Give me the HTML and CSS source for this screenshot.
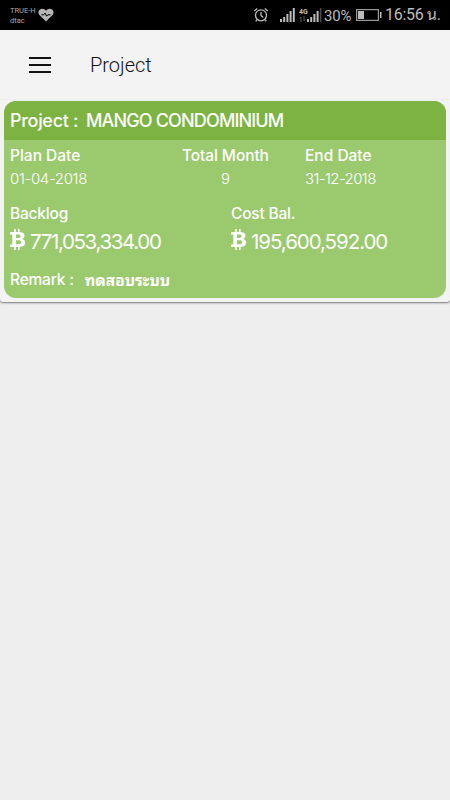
FILE: index.html
```
<!DOCTYPE html>
<html lang="th">
<head>
    <meta charset="UTF-8">
    <meta name="viewport" content="width=device-width, initial-scale=1.0">
    <title>Project</title>
    <link rel="stylesheet" href="styles.css">
</head>
<body>
    <!-- Status bar -->
    <div class="status-bar">
        <div class="carrier">
            <span>TRUE-H</span>
            <span>dtac</span>
        </div>
        <svg class="heart" width="16" height="14" viewBox="0 0 16 14">
            <path d="M8 13.4 1.4 7C-.5 4.8.4 1 3.9.7 5.700.6 7.200 1.500 8 2.700 8.800 1.500 10.300.6 12.100.7 15.600 1 16.500 4.800 14.600 7z" fill="#b5b5b5"/>
            <path d="M3.500 6.800h2.300l1.200-1.800 1.700 3.200 1.200-1.400h2.600" fill="none" stroke="#000" stroke-width="1"/>
        </svg>
        <svg class="alarm" width="16" height="16" viewBox="0 0 16 16" fill="none" stroke="#bcbcbc" stroke-width="1.3">
            <circle cx="8" cy="8.300" r="5.500"/>
            <path d="M8 5v3.500l2.200 2M1.200 4.100 4.200 1.500M14.800 4.100 11.800 1.500M4 12.700l-1.300 1.500M12 12.700l1.300 1.500"/>
        </svg>
        <svg class="signal" width="15" height="14" viewBox="0 0 15 14" fill="#bcbcbc">
            <path d="M0 11h2v3H0zM3.200 9h2v5h-2zM6.400 6h2v8h-2zM9.600 3h2v11h-2zM12.800 0h2v14h-2z"/>
        </svg>
        <div class="network">
            <span>4G</span>
            <svg width="7" height="6" viewBox="0 0 7 6" fill="none" stroke="#555" stroke-width="1">
                <path d="M2 6V1M.5 2.500 2 1M5 0v5M6.500 3.500 5 5"/>
            </svg>
        </div>
        <svg class="signal-two" width="15" height="14" viewBox="0 0 15 14" fill="#bcbcbc">
            <path d="M0 11h2v3H0zM3.200 9h2v5h-2zM6.400 6h2v8h-2zM9.600 3h2v11h-2z"/>
            <path d="M12.800 0h1.600v14h-1.600z" fill="#4a4a4a"/>
        </svg>
        <span class="percent">30%</span>
        <svg class="battery" width="26" height="12" viewBox="0 0 26 12">
            <rect x=".6" y=".6" width="21.800" height="10.800" fill="none" stroke="#999" stroke-width="1.200"/>
            <path d="M2 2h6v8H2z" fill="#bcbcbc"/>
            <path d="M24 3h1.500v6H24z" fill="#bcbcbc"/>
        </svg>
        <span class="clock">16:56 น.</span>
    </div>

    <!-- Toolbar -->
    <header class="toolbar">
        <button class="menu-btn" aria-label="Menu"><i></i><i></i><i></i></button>
        <h1>Project</h1>
    </header>

    <!-- Project card -->
    <main class="project-list">
        <section class="card">
            <h2 class="card-header"><span class="card-key">Project :</span><span class="card-name">MANGO CONDOMINIUM</span></h2>
            <div class="card-body">
                <div class="dates">
                    <div class="field plan">
                        <span class="label">Plan Date</span>
                        <span class="value">01-04-2018</span>
                    </div>
                    <div class="field total">
                        <span class="label">Total Month</span>
                        <span class="value">9</span>
                    </div>
                    <div class="field end">
                        <span class="label">End Date</span>
                        <span class="value">31-12-2018</span>
                    </div>
                </div>
                <div class="amounts">
                    <div class="field backlog">
                        <span class="label">Backlog</span>
                        <div class="money">
                            <svg class="coin" width="16" height="21" viewBox="0 0 16 21">
                                <path d="M0 3h9c3.500 0 5.500 1.200 5.500 3.700 0 1.700-1 2.700-2.500 3.200 2 .4 3.200 1.700 3.200 3.700 0 3-2.400 4.400-6.200 4.400H0v-2.400h2.300V5.400H0zM6 5.600v3.300h2c1.700 0 2.600-.5 2.600-1.700S9.700 5.600 8 5.600zM6 11.200v4h2.300c1.900 0 2.900-.6 2.900-2s-1-2-2.900-2z" fill="#fff" fill-rule="evenodd"/>
                                <path d="M4.200 0h1.600V4H4.200zM8 0h1.600V4H8zM4.200 17h1.600v4H4.200zM8 17h1.600v4H8z" fill="#fff"/>
                            </svg>
                            <span>771,053,334.00</span>
                        </div>
                    </div>
                    <div class="field cost">
                        <span class="label">Cost Bal.</span>
                        <div class="money">
                            <svg class="coin" width="16" height="21" viewBox="0 0 16 21">
                                <path d="M0 3h9c3.500 0 5.500 1.200 5.500 3.700 0 1.700-1 2.700-2.500 3.200 2 .4 3.200 1.700 3.200 3.700 0 3-2.400 4.400-6.200 4.400H0v-2.400h2.300V5.400H0zM6 5.600v3.300h2c1.700 0 2.600-.5 2.600-1.700S9.700 5.600 8 5.600zM6 11.200v4h2.300c1.900 0 2.900-.6 2.900-2s-1-2-2.900-2z" fill="#fff" fill-rule="evenodd"/>
                                <path d="M4.200 0h1.600V4H4.200zM8 0h1.600V4H8zM4.200 17h1.600v4H4.200zM8 17h1.600v4H8z" fill="#fff"/>
                            </svg>
                            <span>195,600,592.00</span>
                        </div>
                    </div>
                </div>
                <div class="remark">
                    <span class="label">Remark :</span>
                    <span class="remark-text">ทดสอบระบบ</span>
                </div>
            </div>
        </section>
    </main>
</body>
</html>
```
FILE: styles.css
```
* {
    box-sizing: border-box;
    margin: 0;
    padding: 0;
}

body {
    font-family: Inter, "Noto Sans Thai", "Noto Sans", sans-serif;
    background: #eee;
    min-height: 100vh;
    overflow: hidden;
}

span {
    white-space: nowrap;
}

svg {
    display: block;
    flex: none;
}

/* Status bar */
.status-bar {
    display: flex;
    align-items: center;
    height: 30px;
    padding-left: 10px;
    background: #000;
    color: #bcbcbc;
    font-family: Roboto, "Noto Sans Thai Looped", Loma, "Noto Sans Thai", sans-serif;
}

.carrier {
    display: flex;
    flex-direction: column;
    width: 27px;
    padding-top: 1px;
    font-size: 7.5px;
    line-height: 10px;
    color: #aaa;
}

.heart {
    margin-left: 1px;
}

.alarm {
    margin-left: 199px;
}

.signal {
    margin-left: 11px;
}

.network {
    width: 10px;
    margin-left: 4px;
    font-size: 7px;
    font-weight: 700;
    line-height: 8px;
}

.signal-two {
    margin-left: -2px;
}

.percent {
    width: 29px;
    margin-left: 2px;
    padding-top: 1px;
    font-size: 15px;
    letter-spacing: -0.2px;
}

.battery {
    margin-left: 3px;
}

.clock {
    margin-left: 3px;
    font-size: 16px;
    line-height: 26px;
    letter-spacing: -0.3px;
}

/* Toolbar */
.toolbar {
    display: flex;
    align-items: center;
    height: 70px;
    padding-left: 29px;
    background: #f3f3f3;
}

.menu-btn {
    display: flex;
    flex-direction: column;
    gap: 5px;
    width: 22px;
    border: 0;
    background: none;
}

.menu-btn i {
    height: 2px;
    background: #111;
}

.toolbar h1 {
    margin-left: 39px;
    font-family: Roboto, sans-serif;
    font-size: 20px;
    font-weight: 300;
    color: #111;
}

/* Project card */
.project-list {
    height: 202px;
    padding: 1px 4px 4px;
    background: #f3f3f3;
    border-radius: 0 0 3px 3px;
    box-shadow: 0 1px 2px rgba(0, 0, 0, 0.5);
}

.card {
    height: 197px;
    border-radius: 12px;
    overflow: hidden;
    background: #9bc96d;
    color: #fff;
}

.card-header {
    display: flex;
    align-items: center;
    height: 39px;
    padding-left: 6px;
    background: #7cb342;
    font-size: 18px;
    font-weight: 450;
}

.card-key {
    width: 76px;
    letter-spacing: -0.3px;
}

.card-name {
    letter-spacing: -0.85px;
}

.card-body {
    padding: 6px 6px 0;
}

.dates {
    display: grid;
    grid-template-columns: 172px 123px 1fr;
    height: 58px;
}

.field {
    display: flex;
    flex-direction: column;
    align-items: flex-start;
}

.label {
    font-size: 15.5px;
    font-weight: 450;
    line-height: 20px;
}

.total .label {
    letter-spacing: -0.1px;
}

.amounts .label,
.remark .label {
    letter-spacing: -0.2px;
}

.value {
    font-size: 15px;
    font-weight: 300;
    line-height: 26px;
}

.plan .value {
    letter-spacing: -0.35px;
}

.end .value {
    letter-spacing: -0.6px;
}

.total .value {
    width: 87px;
    text-align: center;
}

.amounts {
    display: grid;
    grid-template-columns: 221px 1fr;
    height: 66px;
}

.money {
    display: flex;
    align-items: center;
    gap: 4px;
    height: 34px;
    font-size: 20.5px;
}

.coin {
    margin-top: -3px;
}

.backlog .money span {
    letter-spacing: -1.35px;
}

.cost .money span {
    letter-spacing: -1.05px;
}

.remark {
    display: flex;
    gap: 11px;
}

.remark-text {
    font-family: "Noto Sans Thai Looped", Loma, "Noto Sans Thai", "Noto Sans", sans-serif;
    font-size: 15.5px;
    font-weight: 700;
    line-height: 18px;
}
```
